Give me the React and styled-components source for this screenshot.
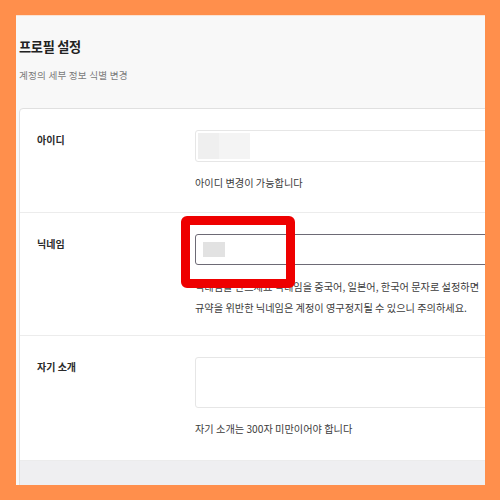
import React from "react";
import styled, { createGlobalStyle } from "styled-components";

const GlobalStyle = createGlobalStyle`
  html, body {
    margin: 0;
    padding: 0;
    background: #ff8f4c;
  }
  body {
    font-family: "Noto Sans CJK KR", "Noto Sans", sans-serif;
  }
`;

const rows = [
  {
    label: "아이디",
    field: "input",
    helper: ["아이디 변경이 가능합니다"],
  },
  {
    label: "닉네임",
    field: "input",
    focused: true,
    marked: true,
    helper: [
      "닉네임을 만드세요 닉네임을 중국어, 일본어, 한국어 문자로 설정하면",
      "규약을 위반한 닉네임은 계정이 영구정지될 수 있으니 주의하세요.",
    ],
  },
  {
    label: "자기 소개",
    field: "textarea",
    helper: ["자기 소개는 300자 미만이어야 합니다"],
  },
];

function App() {
  return (
    <Frame>
      <GlobalStyle />
      <Screen>
        <Header>
          <Title>프로필 설정</Title>
          <Subtitle>계정의 세부 정보 식별 변경</Subtitle>
        </Header>
        <Card>
          {rows.map((row) => {
            const multi = row.helper.length > 1;
            return (
              <Row key={row.label} multi={multi} last={row.field === "textarea"}>
                <Label>{row.label}</Label>
                <Field>
                  {row.field === "textarea" ? (
                    <TextBox />
                  ) : (
                    <InputBox focused={row.focused}>
                      <Blur focused={row.focused} />
                    </InputBox>
                  )}
                  <Helper multi={multi}>
                    {row.helper.map((line) => (
                      <HelperLine key={line} multi={multi}>
                        {line}
                      </HelperLine>
                    ))}
                  </Helper>
                  {row.marked && <Marker />}
                </Field>
              </Row>
            );
          })}
          <Footer />
        </Card>
      </Screen>
    </Frame>
  );
}

export default App;

const Frame = styled.div`
  width: 500px;
  height: 500px;
  box-sizing: border-box;
  padding: 15px 15px 15px 16px;
`;

const Screen = styled.div`
  width: 469px;
  height: 470px;
  background: #f8f8f8;
  border-top: 1px solid #fbe3d3;
  box-sizing: border-box;
  overflow: hidden;
`;

const Header = styled.div`
  padding: 21px 0 0 3px;
`;

const Title = styled.h1`
  margin: 0;
  font-size: 13.2px;
  line-height: 20px;
  font-weight: 700;
  letter-spacing: -0.3px;
  color: #222;
`;

const Subtitle = styled.p`
  margin: 11px 0 0;
  font-size: 9.6px;
  line-height: 14px;
  letter-spacing: 0.2px;
  color: #7a7a7a;
`;

const Card = styled.div`
  margin: 26px 0 0 3px;
  width: 540px;
  background: #fff;
  border: 1px solid #e0e0e0;
  border-radius: 4px;
`;

const Row = styled.div`
  display: grid;
  grid-template-columns: 158px 1fr;
  padding: 21px 0 ${(p) => (p.multi ? "17px" : p.last ? "23px" : "21px")} 17px;
  border-bottom: 1px solid #ececec;
`;

const Label = styled.div`
  font-size: 10px;
  line-height: 20px;
  font-weight: 700;
  color: #2a2a2a;
`;

const Field = styled.div`
  position: relative;
`;

const InputBox = styled.div`
  height: ${(p) => (p.focused ? "31px" : "32px")};
  box-sizing: border-box;
  border: 1px solid ${(p) => (p.focused ? "#6d6a75" : "#e6e6e6")};
  border-radius: 3px;
  display: flex;
  align-items: center;
  padding-left: ${(p) => (p.focused ? "7px" : "2px")};
`;

const Blur = styled.div`
  width: ${(p) => (p.focused ? "22px" : "52px")};
  height: ${(p) => (p.focused ? "15px" : "26px")};
  background: ${(p) =>
    p.focused
      ? "#e2e2e2"
      : "linear-gradient(90deg, #efefef 0 40%, #f4f4f4 40% 100%)"};
`;

const TextBox = styled.div`
  height: 51px;
  box-sizing: border-box;
  border: 1px solid #e6e6e6;
  border-radius: 3px;
`;

const Helper = styled.div`
  margin-top: ${(p) => (p.multi ? "11px" : "13px")};
`;

const HelperLine = styled.div`
  font-size: 10.2px;
  line-height: ${(p) => (p.multi ? "21px" : "16px")};
  color: #3c3c3c;
  white-space: nowrap;
`;

const Marker = styled.div`
  position: absolute;
  left: -14px;
  top: -18px;
  width: 114px;
  height: 72px;
  box-sizing: border-box;
  border: 9px solid #ee0000;
  border-radius: 6px;
`;

const Footer = styled.div`
  height: 40px;
  background: #efeff1;
`;
